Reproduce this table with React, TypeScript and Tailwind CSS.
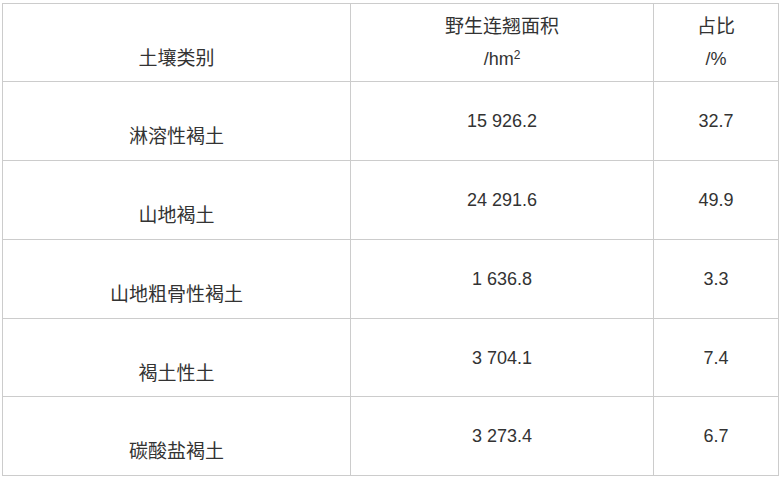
import React from "react";

const rows: [string, string, string, string][] = [
  ["淋溶性褐土", "15 926.2", "32.7", "h-[79px]"],
  ["山地褐土", "24 291.6", "49.9", "h-[79px]"],
  ["山地粗骨性褐土", "1 636.8", "3.3", "h-[79px]"],
  ["褐土性土", "3 704.1", "7.4", "h-[78px]"],
  ["碳酸盐褐土", "3 273.4", "6.7", "h-[79px]"],
];

const font = { fontFamily: '"Liberation Sans", Arial, "Noto Sans CJK SC", sans-serif' };

export default function App() {
  return (
    <div className="bg-white w-[781px] h-[479px] pt-[3px] pl-[2px]" style={font}>
      <table className="border-collapse table-fixed w-[776px] text-[18px] leading-[32px] text-[#333]">
        <colgroup>
          <col className="w-[348px]" />
          <col className="w-[303px]" />
          <col className="w-[125px]" />
        </colgroup>
        <tbody>
          <tr className="h-[78px]">
            <td className="border border-[#ccc] text-center align-middle p-0">
              <br />
              <span className="text-[19px]">土壤类别</span>
            </td>
            <td className="border border-[#ccc] text-center align-middle p-0">
              <span className="text-[19px]">野生连翘面积</span>
              <br />
              /hm<sup className="text-[12px]">2</sup>
            </td>
            <td className="border border-[#ccc] text-center align-middle p-0">
              <span className="text-[19px]">占比</span>
              <br />
              /%
            </td>
          </tr>
          {rows.map((r) => (
            <tr key={r[0]} className={r[3]}>
              <td className="border border-[#ccc] text-center align-middle p-0">
                <br />
                <span className="text-[19px]">{r[0]}</span>
              </td>
              <td className="border border-[#ccc] text-center align-middle p-0">{r[1]}</td>
              <td className="border border-[#ccc] text-center align-middle p-0">{r[2]}</td>
            </tr>
          ))}
        </tbody>
      </table>
    </div>
  );
}
